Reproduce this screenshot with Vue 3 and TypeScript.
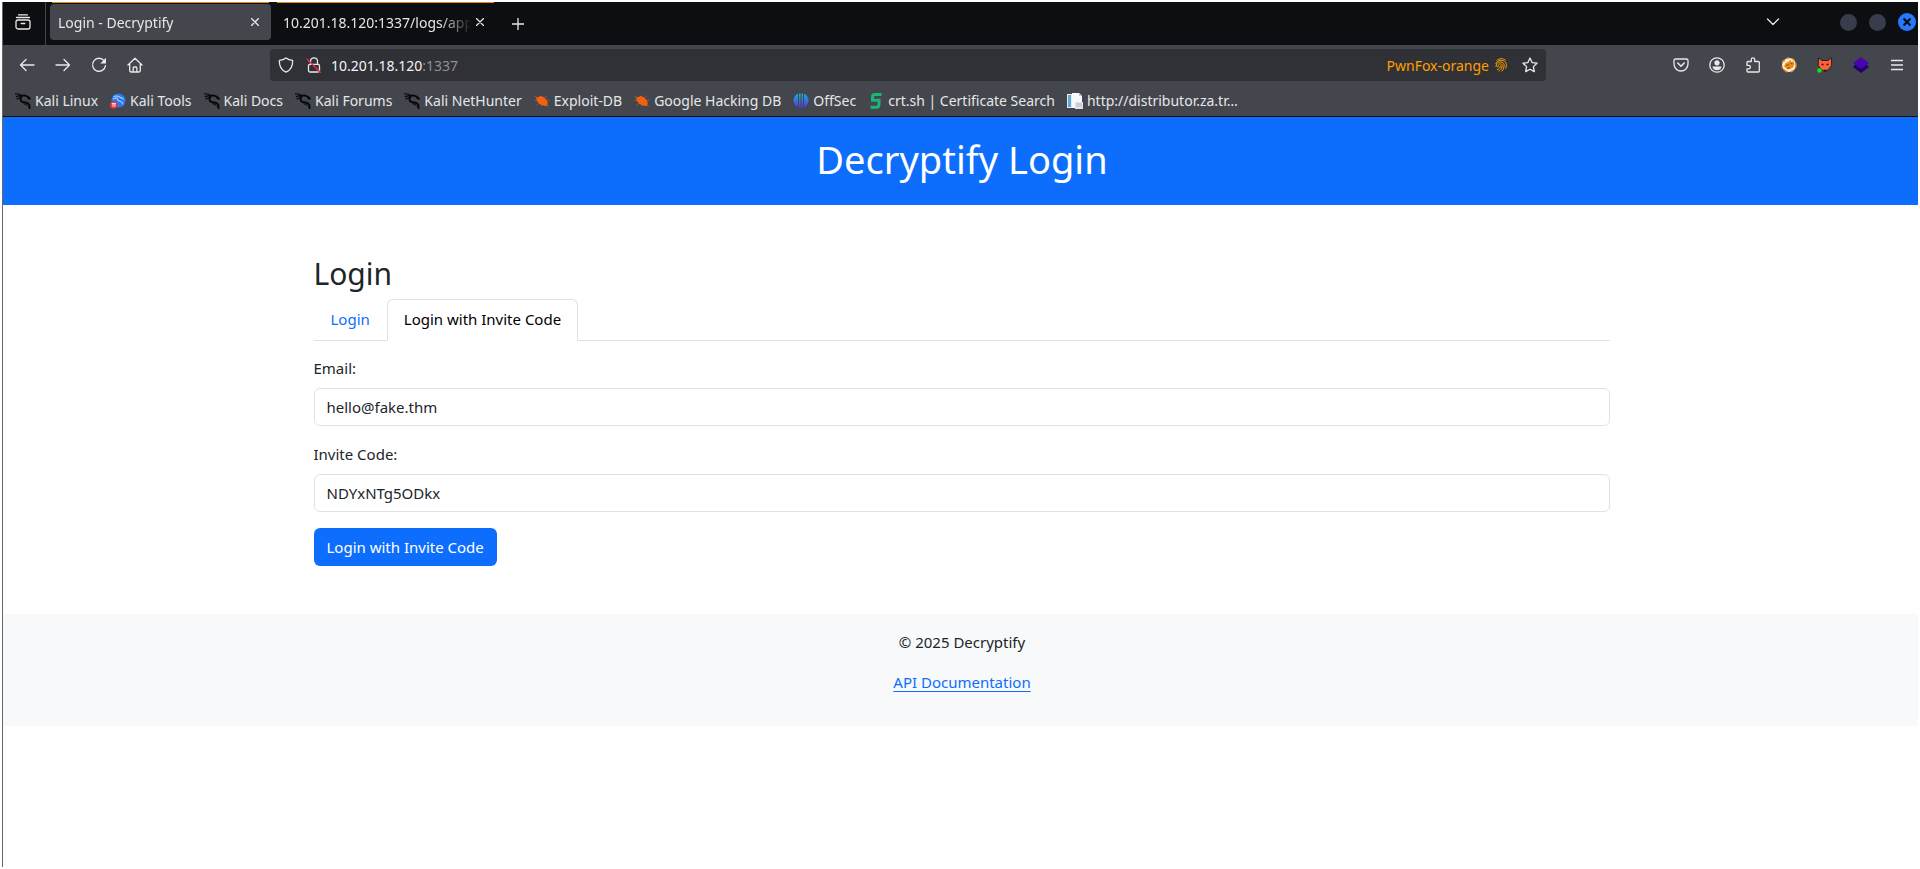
<script setup lang="ts">
import { ref } from 'vue'

type Icon = 'kali' | 'tools' | 'bug' | 'offsec' | 'crt' | 'doc'

interface Bookmark {
  label: string
  icon: Icon
}

const bookmarks: Bookmark[] = [
  { label: 'Kali Linux', icon: 'kali' },
  { label: 'Kali Tools', icon: 'tools' },
  { label: 'Kali Docs', icon: 'kali' },
  { label: 'Kali Forums', icon: 'kali' },
  { label: 'Kali NetHunter', icon: 'kali' },
  { label: 'Exploit-DB', icon: 'bug' },
  { label: 'Google Hacking DB', icon: 'bug' },
  { label: 'OffSec', icon: 'offsec' },
  { label: 'crt.sh | Certificate Search', icon: 'crt' },
  { label: 'http://distributor.za.tr…', icon: 'doc' },
]

const browserTabs = [
  { title: 'Login - Decryptify', active: true },
  { title: '10.201.18.120:1337/logs/app.l', active: false },
]

const email = ref<string>('hello@fake.thm')
const inviteCode = ref<string>('NDYxNTg5ODkx')
</script>

<template>
  <div class="window">
    <div class="chrome">
      <div class="tab-strip">
        <button class="view-btn" type="button" aria-label="Recent browsing">
          <svg width="16" height="16" viewBox="0 0 16 16" class="line">
            <path d="M3.5 .8h9M1.500 3.500h13" />
            <rect x="1" y="6" width="14" height="9" rx="2" />
            <path d="M6.2 9.5h3.6" />
          </svg>
        </button>
        <div
          v-for="tab in browserTabs"
          :key="tab.title"
          class="tab"
          :class="{ active: tab.active }"
        >
          <span class="tab-title">{{ tab.title }}</span>
          <button class="tab-close" type="button" aria-label="Close tab">
            <svg width="8" height="8" viewBox="0 0 8 8" class="line"><path d="M.5 .5l7 7M7.500 .5l-7 7" /></svg>
          </button>
        </div>
        <button class="new-tab" type="button" aria-label="New tab">
          <svg width="12" height="12" viewBox="0 0 12 12" class="line"><path d="M6 0v12M0 6h12" /></svg>
        </button>
        <button class="list-tabs" type="button" aria-label="List all tabs">
          <svg width="14" height="8" viewBox="0 0 14 8" class="line"><path d="M1.500 1L7 6.500 12.500 1" /></svg>
        </button>
        <div class="controls">
          <button class="dot" type="button" aria-label="Minimize"></button>
          <button class="dot" type="button" aria-label="Maximize"></button>
          <button class="dot close" type="button" aria-label="Close window">
            <svg width="8" height="8" viewBox="0 0 8 8"><path d="M.5 .5l7 7M7.500 .5l-7 7" stroke="#0b0d14" stroke-width="2.2" /></svg>
          </button>
        </div>
      </div>

      <div class="nav-bar">
        <button class="tool" type="button" aria-label="Back">
          <svg width="16" height="16" viewBox="0 0 16 16" class="line"><path d="M15 8H1.5M7 2.5L1.5 8 7 13.5" /></svg>
        </button>
        <button class="tool" type="button" aria-label="Forward">
          <svg width="16" height="16" viewBox="0 0 16 16" class="line"><path d="M1 8h13.500M9 2.500L14.500 8 9 13.500" /></svg>
        </button>
        <button class="tool" type="button" aria-label="Reload">
          <svg width="16" height="16" viewBox="0 0 16 16" class="line">
            <path d="M13.200 3.800A6.500 6.500 0 1 0 14.500 8.600" />
            <path d="M15 .8v5.700H9.300z" fill="#e9e9ea" stroke="none" />
          </svg>
        </button>
        <button class="tool" type="button" aria-label="Home">
          <svg width="16" height="16" viewBox="0 0 16 16" class="line">
            <path d="M1 8l7-6.800L15 8M2.700 7v6.500a1.500 1.500 0 0 0 1.500 1.500h7.600a1.500 1.500 0 0 0 1.500-1.500V7M6.200 15v-4a1 1 0 0 1 1-1h1.600a1 1 0 0 1 1 1v4" />
          </svg>
        </button>

        <div class="url-bar">
          <button class="url-icon" type="button" aria-label="Tracking protection">
            <svg width="16" height="16" viewBox="0 0 16 16" class="line">
              <path d="M8 .9c2 1.500 4.200 2.200 6.600 2.500.4 5.200-1.600 9.500-6.600 11.800C3 12.900 1 8.600 1.400 3.400 3.800 3.100 6 2.400 8 .9z" />
            </svg>
          </button>
          <button class="url-icon" type="button" aria-label="Connection not secure">
            <svg width="16" height="16" viewBox="0 0 16 16" class="line">
              <path d="M4.500 7V4.300a3.500 3.500 0 0 1 7 0V7" />
              <rect x="2.500" y="7.300" width="11" height="7.700" rx="1.500" />
              <path d="M1.200 2.200l13.300 13.300" stroke="#e22850" stroke-width="1.500" />
            </svg>
          </button>
          <span class="url"><span class="host">10.201.18.120</span>:1337</span>
          <span class="container-label">PwnFox-orange</span>
          <svg class="finger" width="12" height="14" viewBox="0 0 12 14" fill="none" stroke="#ff9f00" stroke-width="1">
            <path d="M1.500 2.800C4 .2 8 .1 10.800 2.300M.8 6C1.600 2 8.500 1 10.800 4.600c1 2.300.6 4.600-.2 6.200M1 9c0-3 1.500-5 4.500-5s4.200 2.300 3.500 5c-.3 1.700-1.200 3.200-2.300 4.400M2.800 9.500C2.600 7.300 4 5.800 5.500 5.800S7.600 7.300 7 9c-.5 1.900-1.600 3.200-3.200 4.200M5.600 7.500C5.400 9.600 4 11.200 2 11.800" />
          </svg>
          <button class="star" type="button" aria-label="Bookmark this page">
            <svg width="16" height="16" viewBox="0 0 16 16" class="line">
              <path d="M8 1l2.100 4.600 4.900.6-3.600 3.400.9 5L8 12.200l-4.300 2.400.9-5L1 6.200l4.900-.6z" />
            </svg>
          </button>
        </div>

        <button class="tool" type="button" aria-label="Save to Pocket">
          <svg width="16" height="16" viewBox="0 0 16 16" class="line">
            <path d="M2.500 2h11A1.500 1.500 0 0 1 15 3.500V7A7 7 0 0 1 1 7V3.500A1.500 1.500 0 0 1 2.500 2z" />
            <path d="M4.800 6L8 9.200 11.200 6" stroke-width="1.600" />
          </svg>
        </button>
        <button class="tool" type="button" aria-label="Account">
          <svg width="16" height="16" viewBox="0 0 16 16" class="line">
            <circle cx="8" cy="8" r="7.200" />
            <circle cx="8" cy="5.800" r="2.600" fill="#e9e9ea" stroke="none" />
            <path d="M3.500 9.500h9c0 2-2 3.800-4.500 3.800s-4.500-1.800-4.500-3.800z" fill="#e9e9ea" stroke="none" />
          </svg>
        </button>
        <button class="tool" type="button" aria-label="Extensions">
          <svg width="16" height="16" viewBox="0 0 16 16" class="line">
            <path d="M6.300 4.500V2.600a1.700 1.700 0 0 1 3.400 0v1.900h3.600a1 1 0 0 1 1 1V14a1 1 0 0 1-1 1H3a1 1 0 0 1-1-1v-2.200h1.700a1.700 1.700 0 0 0 0-3.400H2V5.500a1 1 0 0 1 1-1z" />
          </svg>
        </button>
        <button class="tool" type="button" aria-label="Proxy extension">
          <svg width="16" height="16" viewBox="0 0 16 16">
            <circle cx="8" cy="8" r="7" fill="#f6efe2" stroke="#ee8a12" stroke-width="1.400" stroke-dasharray="3 3" />
            <path d="M3 9.500l1.500-3.500L8 4.500l1-2 1.500 2.200 2.500-.2.500 3-2 3.500-4 1.500-2-1z" fill="#f08c10" />
            <path d="M5 8.500l3-1M9.500 6.500l2 .3M6 11.500l3-1" stroke="#7b5126" stroke-width="1" />
            <path d="M2 13l2-1 2 2.500zM1.500 4.500L4.500 2l-1 3z" fill="#f08c10" />
          </svg>
        </button>
        <button class="tool" type="button" aria-label="PwnFox">
          <svg width="16" height="16" viewBox="0 0 16 16">
            <path d="M1.500 .8L5 3.500h6L14.500 .8l.2 7.500-3 4L8 14.500l-4-2.200-2.800-4z" fill="#ff6136" stroke="#2b2021" stroke-width="1" />
            <path d="M4.500 7.500h2M9.500 7.500h2M7 13.500h2" stroke="#1d1718" stroke-width="1.500" />
            <circle cx="2.500" cy="13.500" r="2.300" fill="#0be810" />
          </svg>
        </button>
        <button class="tool" type="button" aria-label="Layers extension">
          <svg width="16" height="16" viewBox="0 0 16 16">
            <path d="M0 10l2.500-2.500h11L16 10l-8 6z" fill="#1e0070" />
            <path d="M8 0l8 6-8 6-8-6z" fill="#4606ac" />
          </svg>
        </button>
        <button class="tool" type="button" aria-label="Open application menu">
          <svg width="12" height="12" viewBox="0 0 12 12" class="line"><path d="M0 1.500h12M0 6h12M0 10.500h12" /></svg>
        </button>
      </div>

      <nav class="bookmarks" aria-label="Bookmarks">
        <a v-for="mark in bookmarks" :key="mark.label" class="bookmark" href="#">
          <svg width="16" height="16" viewBox="0 0 16 16">
            <g v-if="mark.icon === 'kali'" fill="none" stroke="#050607">
              <path d="M0 .8c2.700-.2 5.200.4 7.200 2M.8 3.600c2.200-1 4.500-1 6.600-.2M1.500 6.200C3 5 5 4.500 7 4.500" stroke-width="1.200" />
              <path d="M6 3.400c2-1.400 4-1.200 5.500-.2 1.400.4 2.300.9 3.200 2.200l-2.200-.3" stroke-width="1.800" />
              <path d="M6.800 3.800C4.900 5.200 5 7.900 7.400 8.900c2.600 1 5.600.5 6.600 2.500.6 1.400.4 2.600.7 4.400" stroke-width="2" />
              <path d="M8.500 10.800c2 .3 3.500.9 4.200 2.600" stroke-width="1" />
            </g>
            <g v-else-if="mark.icon === 'tools'">
              <circle cx="8.500" cy="7.500" r="7" fill="#2878f5" />
              <path d="M3.500 3.500c3-.9 5-.4 6.500.9 1.500.2 2.600.7 3.600 2M7.500 4.500C6.500 6.500 8 7.800 10 8.300c1.600.5 2.600 1.400 3 3.200M3 6c1.500-1 3-1.200 4.500-1" fill="none" stroke="#b5d0fb" stroke-width="1.100" />
              <circle cx="3.800" cy="12" r="3.800" fill="#e5343e" />
              <path d="M1.800 10.600h4M3 10.600v3.200M4.900 10.600v3.200" stroke="#fff" stroke-width=".9" />
            </g>
            <g v-else-if="mark.icon === 'bug'">
              <path d="M.5 3.500l4 1.500M.3 7.500h4M2.500 12l3-2M7 13l1.500-2M11 4l2-1.500M12.500 7.500l3-.5M13 12.500l2 .5" stroke="#a85a2d" stroke-width=".8" />
              <path d="M2 4.500l3-.4 1-1.300 2 .8 2.500.9 2.500 3 .8 2.700-.9 2.800-2.500-.2-2.500-.6-3-1.600L3 7.800z" fill="#f2610f" />
            </g>
            <g v-else-if="mark.icon === 'offsec'">
              <defs>
                <linearGradient id="offsec-fill" x1="0" y1="0" x2="0" y2="1">
                  <stop offset="0" stop-color="#14b4c8" />
                  <stop offset="1" stop-color="#5d2be6" />
                </linearGradient>
              </defs>
              <path d="M5 .8v13.400C-1 12 -1 3 5 .8zM11 .8v13.400c6-2.200 6-11.200 0-13.400zM6 .5h1.500v15L6 14.500zM8.500.5H10v14l-1.500 1z" fill="url(#offsec-fill)" />
            </g>
            <path
              v-else-if="mark.icon === 'crt'"
              d="M13.500 1.500H7Q4.500 1.500 4.500 4v3.300h6.500v4Q11 14.300 8.500 14.300H2.500"
              fill="none"
              stroke="#17b877"
              stroke-width="3"
            />
            <g v-else>
              <path d="M0 1h10v14H0z" fill="#e4eaf0" />
              <path d="M1 2h3v12H1z" fill="#63a5d3" />
              <path d="M5 0h7l3 3v12H5z" fill="#f8f9fa" />
              <path d="M12 0v3h3z" fill="#bcc3cb" />
              <path d="M8 9h8v7H8z" fill="#dfe2e6" />
              <path d="M9 11h6M9 13h6" stroke="#b6bbc5" />
            </g>
          </svg>
          <span>{{ mark.label }}</span>
        </a>
      </nav>
    </div>

    <div class="page">
      <header class="hero"><h1>Decryptify Login</h1></header>

      <main class="container">
        <h2>Login</h2>
        <div class="form-tabs" role="tablist">
          <button class="form-tab" type="button" role="tab" aria-selected="false">Login</button>
          <button class="form-tab selected" type="button" role="tab" aria-selected="true">Login with Invite Code</button>
        </div>
        <form @submit.prevent>
          <label for="email">Email:</label>
          <input id="email" v-model="email" type="email" />
          <label for="invite">Invite Code:</label>
          <input id="invite" v-model="inviteCode" type="text" />
          <button class="submit" type="submit">Login with Invite Code</button>
        </form>
      </main>

      <footer class="footer">
        <p>© 2025 Decryptify</p>
        <p><a href="#">API Documentation</a></p>
      </footer>
    </div>
  </div>
</template>

<style>
body {
  margin: 0;
  background: #fff;
}
</style>

<style scoped>
* {
  box-sizing: border-box;
}

button,
input {
  font: inherit;
  color: inherit;
}

button {
  padding: 0;
  border: 0;
  background: none;
}

svg {
  flex: none;
  display: block;
}

.line {
  fill: none;
  stroke: #e9e9ea;
  stroke-width: 1.3;
  stroke-linecap: round;
  stroke-linejoin: round;
}

.window {
  min-height: calc(100vh - 4px);
  margin: 2px;
  border-left: 1px solid #66676a;
  font-family: 'Noto Sans', 'Open Sans', sans-serif;
}

.chrome {
  border-bottom: 1px solid #0d0e12;
  background: #44464d;
  color: #e6e6e8;
  font-size: 14px;
}

.tab-strip {
  display: flex;
  height: 43px;
  background: #0d0e12;
}

.view-btn {
  display: flex;
  align-items: center;
  justify-content: center;
  width: 43px;
  padding: 0 2px 4px 0;
  margin-right: 4px;
  border-right: 1px solid #44464d;
}

.tab {
  position: relative;
  display: flex;
  align-items: center;
  width: 221px;
  height: 36px;
  margin: 2px 4px 0 0;
  padding: 0 8px;
  border-radius: 4px;
}

.tab::before {
  content: '';
  position: absolute;
  top: -2px;
  left: 2px;
  right: 2px;
  height: 1px;
  background: #ea8a0b;
}

.tab.active {
  background: #44464d;
}

.tab-title {
  flex: 1;
  overflow: hidden;
  white-space: nowrap;
  mask-image: linear-gradient(to left, transparent, #000 32px);
}

.tab-close {
  display: flex;
  justify-content: center;
  width: 16px;
}

.new-tab {
  width: 36px;
  display: flex;
  align-items: center;
  justify-content: center;
}

.list-tabs {
  display: flex;
  align-items: center;
  margin-left: auto;
  padding-bottom: 4px;
}

.controls {
  display: flex;
  align-items: center;
  gap: 12px;
  margin-left: 60px;
  padding: 0 2px 3px 0;
}

.dot {
  display: flex;
  align-items: center;
  justify-content: center;
  width: 17px;
  height: 17px;
  border-radius: 50%;
  background: #383d4b;
}

.dot.close {
  width: 18px;
  height: 18px;
  background: #2777ff;
}

.nav-bar {
  display: flex;
  align-items: center;
  height: 40px;
  padding: 0 3px 0 6px;
}

.tool {
  display: flex;
  align-items: center;
  justify-content: center;
  width: 36px;
  height: 32px;
}

.url-bar {
  flex: 1;
  display: flex;
  align-items: center;
  height: 32px;
  margin: 0 117px;
  padding: 0 8px;
  border-radius: 4px;
  background: #303136;
}

.url-icon {
  margin-right: 12px;
}

.url {
  flex: 1;
  margin-left: -3px;
  color: #8f9094;
}

.host {
  color: #f4f4f5;
}

.container-label {
  color: #ff9f00;
}

.finger {
  margin: 0 15px 0 6px;
}

.bookmarks {
  display: flex;
  gap: 12px;
  height: 31px;
  padding: 0 12px;
}

.bookmark {
  display: flex;
  align-items: center;
  gap: 4px;
  color: inherit;
  white-space: nowrap;
  text-decoration: none;
}

.page {
  color: #212529;
  font-size: 15px;
  line-height: 24px;
}

.hero {
  padding: 18px 0 22px 3px;
  background: #0d6efd;
  color: #fff;
  text-align: center;
}

h1,
h2 {
  margin: 0;
  font-weight: 400;
}

h1 {
  font-size: 38px;
  line-height: 48px;
}

h2 {
  margin-bottom: 5px;
  font-size: 30px;
  line-height: 40px;
}

.container {
  max-width: 1320px;
  margin: 0 auto;
  padding: 49px 11px 48px 13px;
}

.form-tabs {
  display: flex;
  height: 42px;
  border-bottom: 1px solid #dee2e6;
}

.form-tab {
  height: 42px;
  padding: 0 16px 2px;
  border: 1px solid transparent;
  color: #0d6efd;
}

.form-tab.selected {
  border-color: #dee2e6;
  border-bottom-color: #fff;
  border-radius: 6px 6px 0 0;
  background: #fff;
  color: #000;
}

form {
  margin-top: 15px;
}

label {
  display: block;
  margin-bottom: 8px;
}

input {
  display: block;
  width: 100%;
  height: 38px;
  margin-bottom: 16px;
  padding: 0 12px;
  border: 1px solid #dee2e6;
  border-radius: 6px;
  background: #fff;
}

.submit {
  height: 38px;
  padding: 0 13px;
  border-radius: 6px;
  background: #0d6efd;
  color: #fff;
}

.footer {
  padding: 16px 0 16px 3px;
  background: #f8f9fa;
  text-align: center;
}

.footer p {
  margin: 0 0 16px;
}

.footer a {
  color: #0d6efd;
  text-underline-offset: 3px;
}
</style>
